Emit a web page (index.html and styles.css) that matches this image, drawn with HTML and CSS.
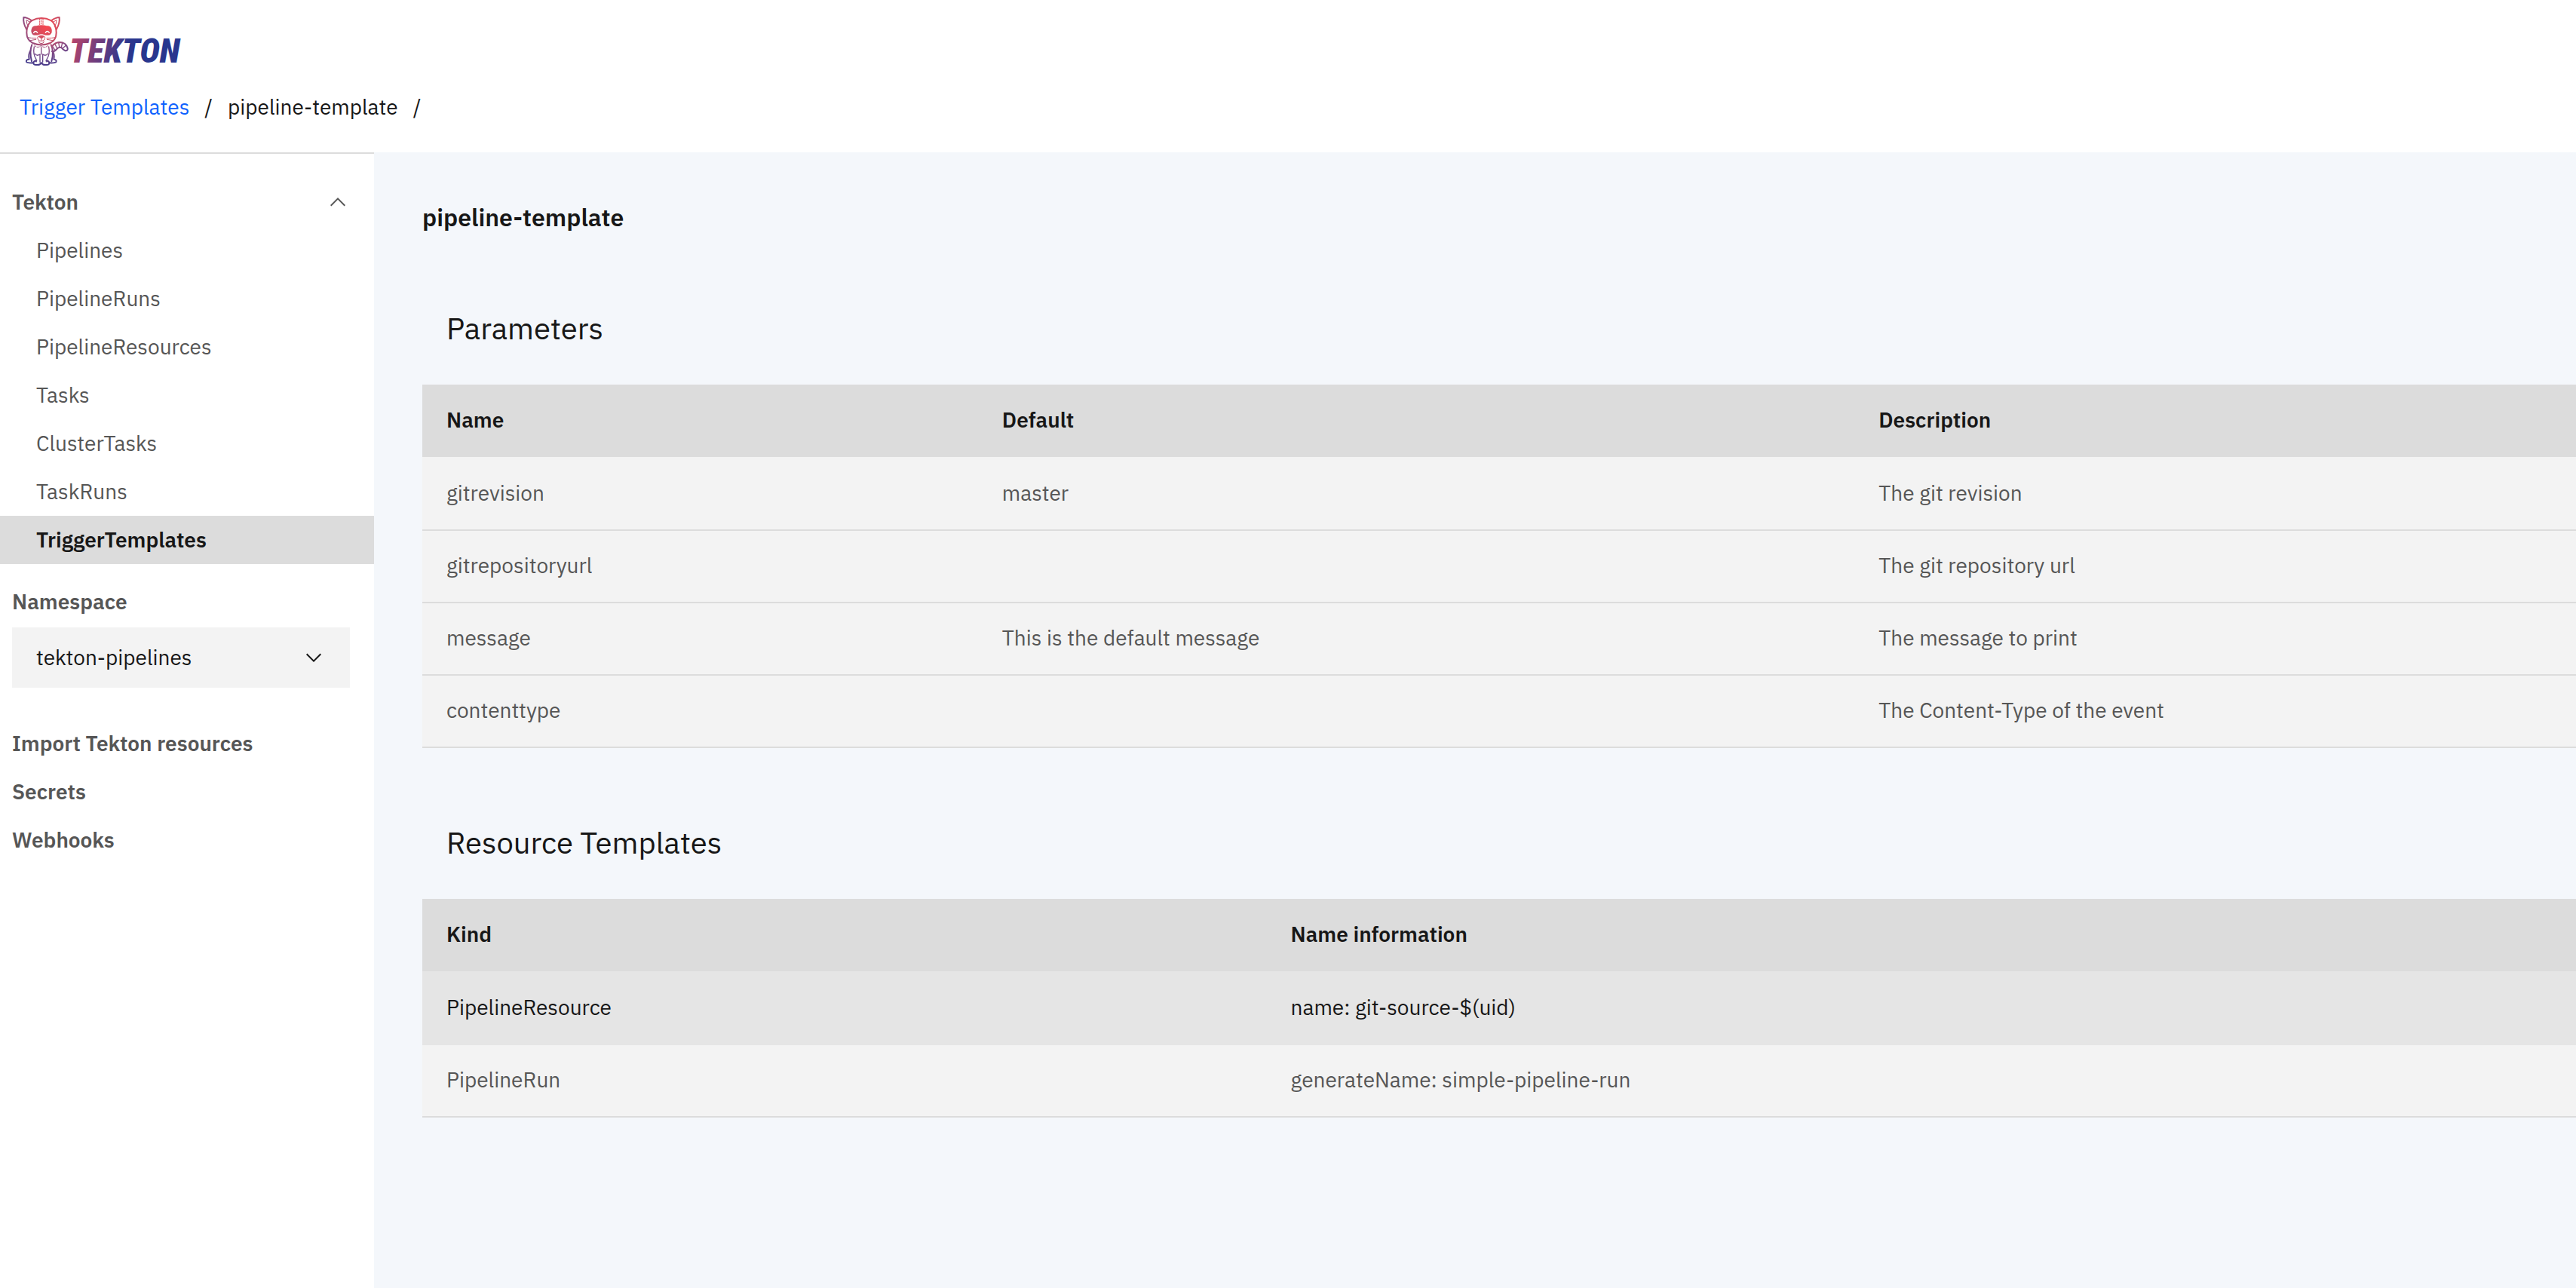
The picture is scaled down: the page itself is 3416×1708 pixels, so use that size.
FILE: index.html
```html
<!DOCTYPE html>
<html lang="en">
<head>
<meta charset="utf-8">
<meta name="viewport" content="width=device-width, initial-scale=1">
<title>Tekton Dashboard</title>
<link rel="stylesheet" href="styles.css">
</head>
<body>
<header class="header">
  <svg class="logo" viewBox="84 60 690 234" role="img" aria-label="Tekton">
    <defs>
      <radialGradient id="cat" gradientUnits="userSpaceOnUse" cx="185" cy="105" r="175">
        <stop offset="0" stop-color="#f8474f"/>
        <stop offset="0.3" stop-color="#d04c60"/>
        <stop offset="0.55" stop-color="#8a4a82"/>
        <stop offset="1" stop-color="#35388f"/>
      </radialGradient>
      <linearGradient id="word" gradientUnits="userSpaceOnUse" x1="290" y1="160" x2="500" y2="220">
        <stop offset="0" stop-color="#b4446c"/>
        <stop offset="1" stop-color="#29368e"/>
      </linearGradient>
    </defs>
    <g fill="none" stroke="url(#cat)" stroke-width="6" stroke-linejoin="round" stroke-linecap="round">
      <path d="M126 82 Q108 69 94 69 Q91 92 106 118"/>
      <path d="M204 82 Q222 69 236 69 Q239 92 224 118"/>
      <path d="M105 82 Q106 97 113 106 M118 87 L105 80 M225 82 Q224 97 217 106 M212 87 L225 80" stroke-width="3"/>
      <path d="M126 82 Q165 62 204 82 Q224 99 224 130 Q224 160 200 171 Q165 186 130 171 Q106 160 106 130 Q106 99 126 82 Z"/>
      <path d="M158 76 V98 M171 76 V98 M164 73 V96" stroke-width="3" stroke-dasharray="5 4"/>
      <path d="M127 178 Q116 205 126 244 M203 178 Q216 205 205 244"/>
      <path d="M137 180 Q150 195 163 181 Q178 195 192 180" stroke-width="3" stroke-dasharray="9 4"/>
      <path d="M136 186 Q130 216 144 236 V246 M194 186 Q200 216 186 236 V246" stroke-width="4"/>
      <path d="M159 247 V216 Q147 224 139 214 M170 247 V216 Q182 224 190 214 M164 188 V216" stroke-width="4"/>
      <path d="M163 250 Q160 259 147 258 Q132 260 133 248 Q136 241 145 242 M166 250 Q169 259 182 258 Q197 260 196 248 Q193 241 184 242"/>
      <path d="M121 202 Q112 216 116 236 Q103 236 105 246 Q107 251 133 250 M209 202 Q218 216 214 236 Q227 238 223 247 Q219 251 196 250"/>
      <path d="M207 205 Q217 206 225 196 Q235 184 245 190 Q250 197 260 202 Q270 203 269 192 Q263 168 236 168 Q219 169 207 184"/>
      <path d="M219 176 L227 192 M233 169 L236 186 M248 171 L244 188 M262 181 L249 193 M209 184 L219 200" stroke-width="4"/>
    </g>
    <path fill="url(#cat)" d="M126 114 Q130 101 144 103 Q165 97 186 103 Q200 101 205 114 Q210 129 199 139 Q188 142 176 139 Q165 132 154 139 Q142 142 131 139 Q120 128 126 114 Z"/>
    <g fill="none" stroke="#fff" stroke-width="4" stroke-linecap="round"><path d="M134 130 Q141 119 149 130 M181 130 Q188 119 196 130"/></g>
    <path fill="#fff" stroke="url(#cat)" stroke-width="3" d="M150 147 Q148 163 164 163 Q180 163 179 147 Q165 136 150 147 Z"/>
    <path fill="url(#cat)" d="M154 144 Q165 139 175 144 Q174 152 165 154 Q156 152 154 144 Z"/>
    <path fill="none" stroke="url(#cat)" stroke-width="3" stroke-linecap="round" d="M165 154 V160 M154 165 Q155 173 165 173 Q174 173 175 165 M108 149 Q124 152 144 152 M115 162 L143 157 M222 149 Q206 152 186 152 M215 162 L187 157"/>
    <text class="logo-word" x="276" y="250" fill="url(#word)">TEKTON</text>
  </svg>
  <nav class="breadcrumb" aria-label="Breadcrumb">
    <a class="crumb-link" href="#trigger-templates">Trigger Templates</a>
    <span>/</span>
    <span>pipeline-template</span>
    <span>/</span>
  </nav>
</header>
<div class="layout">
  <aside class="sidebar">
    <nav aria-label="Main">
      <button class="nav-group" type="button" aria-expanded="true">
        <span>Tekton</span>
        <svg class="chevron" viewBox="0 0 16 16" aria-hidden="true"><path d="M8 5L13 10 12.3 10.7 8 6.4 3.7 10.7 3 10z"/></svg>
      </button>
      <a class="nav-sub" href="#pipelines">Pipelines</a>
      <a class="nav-sub" href="#pipelineruns">PipelineRuns</a>
      <a class="nav-sub" href="#pipelineresources">PipelineResources</a>
      <a class="nav-sub" href="#tasks">Tasks</a>
      <a class="nav-sub" href="#clustertasks">ClusterTasks</a>
      <a class="nav-sub" href="#taskruns">TaskRuns</a>
      <a class="nav-sub nav-current" href="#triggertemplates" aria-current="page">TriggerTemplates</a>
    </nav>
    <div class="namespace">
      <label class="namespace-label" for="namespace">Namespace</label>
      <div class="select-box">
        <select class="select" id="namespace"><option>tekton-pipelines</option></select>
        <svg class="chevron select-chevron" viewBox="0 0 16 16" aria-hidden="true"><path d="M8 11L3 6 3.7 5.3 8 9.6 12.3 5.3 13 6z"/></svg>
      </div>
    </div>
    <nav aria-label="Extensions">
      <a class="nav-item" href="#import">Import Tekton resources</a>
      <a class="nav-item" href="#secrets">Secrets</a>
      <a class="nav-item" href="#webhooks">Webhooks</a>
    </nav>
  </aside>
  <main class="main">
    <h1 class="title">pipeline-template</h1>
    <section class="section">
      <h2 class="section-title" id="parameters">Parameters</h2>
      <table class="table" aria-labelledby="parameters">
        <colgroup><col class="col-name"><col class="col-default"><col></colgroup>
        <thead><tr><th>Name</th><th>Default</th><th>Description</th></tr></thead>
        <tbody>
          <tr><td>gitrevision</td><td>master</td><td>The git revision</td></tr>
          <tr><td>gitrepositoryurl</td><td></td><td>The git repository url</td></tr>
          <tr><td>message</td><td>This is the default message</td><td>The message to print</td></tr>
          <tr><td>contenttype</td><td></td><td>The Content-Type of the event</td></tr>
        </tbody>
      </table>
    </section>
    <section class="section">
      <h2 class="section-title" id="resources">Resource Templates</h2>
      <table class="table" aria-labelledby="resources">
        <colgroup><col class="col-kind"><col></colgroup>
        <thead><tr><th>Kind</th><th>Name information</th></tr></thead>
        <tbody>
          <tr class="row-active"><td>PipelineResource</td><td>name: git-source-$(uid)</td></tr>
          <tr><td>PipelineRun</td><td>generateName: simple-pipeline-run</td></tr>
        </tbody>
      </table>
    </section>
  </main>
</div>
</body>
</html>
```
FILE: styles.css
```css
* {
  box-sizing: border-box;
}

body {
  margin: 0;
  min-height: 100vh;
  display: flex;
  flex-direction: column;
  background: #fff;
  color: #171717;
  font-family: "IBM Plex Sans", "Open Sans", "Noto Sans", sans-serif;
  font-size: 28px;
  line-height: 36px;
}

a {
  color: inherit;
  text-decoration: none;
}

.header {
  padding: 20px 26px 42px;
}

.logo {
  display: block;
  width: 230px;
  height: 78px;
  margin-left: 2px;
  overflow: visible;
}

.logo-word {
  font-family: "Roboto Condensed", Roboto, sans-serif;
  font-size: 135px;
  font-style: italic;
  font-weight: 900;
}

.breadcrumb {
  display: flex;
  gap: 20px;
  margin-top: 26px;
}

.crumb-link {
  color: #0f62fe;
}

.layout {
  flex: 1;
  display: flex;
}

.sidebar {
  flex: none;
  width: 496px;
  padding-top: 32px;
  border-top: 2px solid #dcdcdc;
  color: #565656;
}

.nav-group,
.nav-item,
.nav-sub {
  display: flex;
  align-items: center;
  width: 100%;
  height: 64px;
  padding: 0 32px 0 16px;
  font-weight: 600;
}

.nav-group {
  justify-content: space-between;
  border: 0;
  background: none;
  color: inherit;
  font-family: inherit;
  font-size: inherit;
  line-height: 36px;
}

.nav-sub {
  padding-left: 48px;
  font-weight: 400;
}

.nav-current {
  background: #dcdcdc;
  color: #171717;
  font-weight: 600;
}

.chevron {
  width: 32px;
  height: 32px;
  fill: currentColor;
}

.namespace {
  padding: 32px 32px 42px 16px;
}

.namespace-label {
  display: block;
  margin-bottom: 16px;
  font-weight: 600;
}

.select-box {
  display: grid;
  align-items: center;
  color: #171717;
}

.select,
.select-chevron {
  grid-area: 1 / 1;
}

.select {
  width: 100%;
  height: 80px;
  padding: 0 80px 0 32px;
  border: 0;
  border-radius: 0;
  appearance: none;
  background: #f3f3f3;
  color: inherit;
  font: inherit;
}

.select-chevron {
  justify-self: end;
  margin-right: 32px;
  pointer-events: none;
}

.main {
  flex: 1;
  padding: 64px 0 64px 64px;
  background: #f4f7fb;
}

.title {
  margin: 0;
  font-size: 32px;
  font-weight: 600;
  line-height: 44px;
}

.section {
  margin-top: 96px;
}

.section-title {
  margin: 0 0 47px;
  padding: 1px 0 0 32px;
  font-size: 40px;
  font-weight: 400;
  line-height: 56px;
}

.table {
  width: 100%;
  table-layout: fixed;
  border-collapse: separate;
  border-spacing: 0;
}

.col-name {
  width: 25.8%;
}

.col-default {
  width: 40.7%;
}

.col-kind {
  width: 39.2%;
}

th,
td {
  height: 96px;
  padding: 0 32px 2px;
  text-align: left;
}

th {
  background: #dcdcdc;
  font-weight: 600;
}

td {
  background: #f3f3f3;
  border-bottom: 2px solid #dcdcdc;
  color: #565656;
}

tbody tr:first-child td {
  height: 98px;
  border-top: 2px solid #f3f3f3;
}

tbody .row-active:first-child td {
  background: #e5e5e5;
  border-color: #e5e5e5;
  color: #171717;
}
```
